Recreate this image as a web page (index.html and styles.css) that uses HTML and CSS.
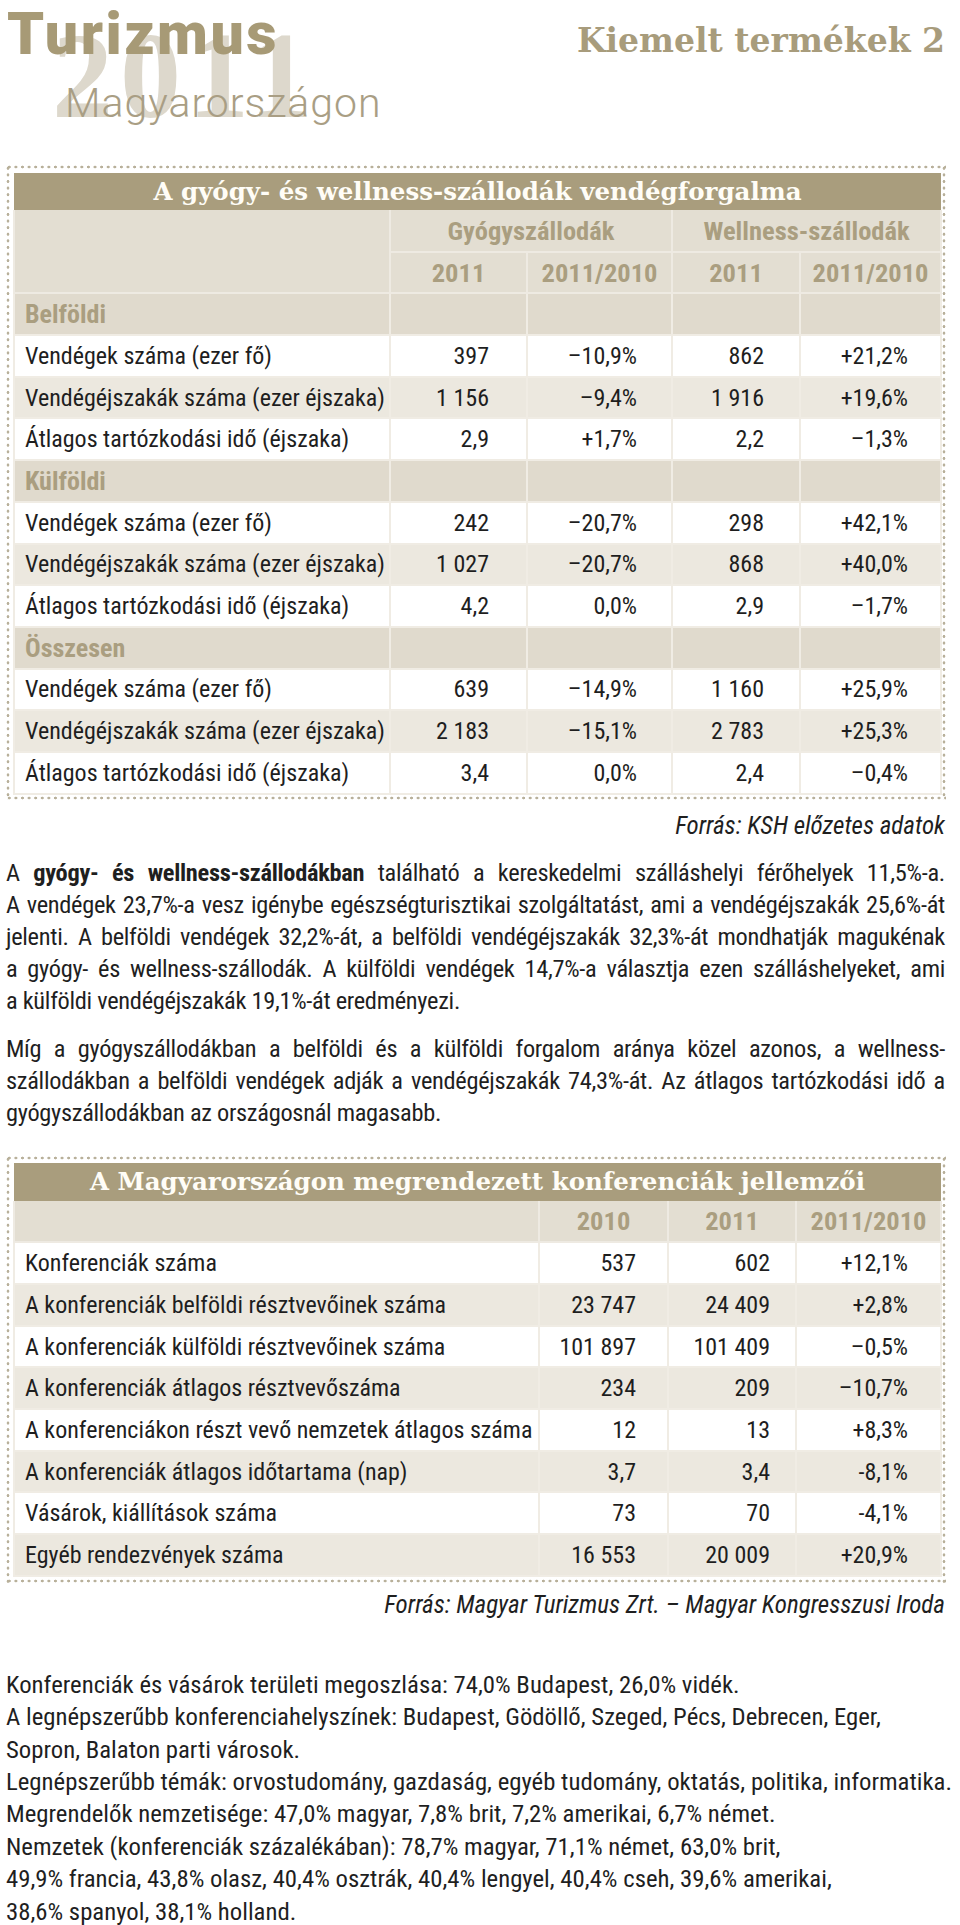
FILE: index.html
```html
<!DOCTYPE html>
<html lang="hu">
<head>
<meta charset="utf-8">
<title>Turizmus 2011 Magyarországon – Kiemelt termékek 2</title>
<link rel="stylesheet" href="styles.css">
</head>
<body>
<div class="page">
  <header class="masthead">
    <div class="brand">
      <span class="brand-year">2011</span>
      <h1 class="brand-name">Turizmus</h1>
      <p class="brand-sub">Magyarországon</p>
    </div>
    <p class="section">Kiemelt termékek 2</p>
  </header>

  <div class="frame">
    <table class="data t1">
      <colgroup>
        <col class="c-label"><col class="c-a"><col class="c-b"><col class="c-c"><col class="c-d">
      </colgroup>
      <thead>
        <tr class="title"><th colspan="5">A gyógy- és wellness-szállodák vendégforgalma</th></tr>
        <tr class="head"><th rowspan="2"></th><th colspan="2">Gyógyszállodák</th><th colspan="2">Wellness-szállodák</th></tr>
        <tr class="head"><th>2011</th><th>2011/2010</th><th>2011</th><th>2011/2010</th></tr>
      </thead>
      <tbody>
        <tr class="group"><th>Belföldi</th><td></td><td></td><td></td><td></td></tr>
        <tr><th>Vendégek száma (ezer fő)</th><td>397</td><td>–10,9%</td><td>862</td><td>+21,2%</td></tr>
        <tr class="alt"><th>Vendégéjszakák száma (ezer éjszaka)</th><td>1 156</td><td>–9,4%</td><td>1 916</td><td>+19,6%</td></tr>
        <tr><th>Átlagos tartózkodási idő (éjszaka)</th><td>2,9</td><td>+1,7%</td><td>2,2</td><td>–1,3%</td></tr>
        <tr class="group"><th>Külföldi</th><td></td><td></td><td></td><td></td></tr>
        <tr><th>Vendégek száma (ezer fő)</th><td>242</td><td>–20,7%</td><td>298</td><td>+42,1%</td></tr>
        <tr class="alt"><th>Vendégéjszakák száma (ezer éjszaka)</th><td>1 027</td><td>–20,7%</td><td>868</td><td>+40,0%</td></tr>
        <tr><th>Átlagos tartózkodási idő (éjszaka)</th><td>4,2</td><td>0,0%</td><td>2,9</td><td>–1,7%</td></tr>
        <tr class="group"><th>Összesen</th><td></td><td></td><td></td><td></td></tr>
        <tr><th>Vendégek száma (ezer fő)</th><td>639</td><td>–14,9%</td><td>1 160</td><td>+25,9%</td></tr>
        <tr class="alt"><th>Vendégéjszakák száma (ezer éjszaka)</th><td>2 183</td><td>–15,1%</td><td>2 783</td><td>+25,3%</td></tr>
        <tr><th>Átlagos tartózkodási idő (éjszaka)</th><td>3,4</td><td>0,0%</td><td>2,4</td><td>–0,4%</td></tr>
      </tbody>
    </table>
  </div>
  <p class="source">Forrás: KSH előzetes adatok</p>

  <p class="text">
    <span class="ln">A <b>gyógy- és wellness-szállodákban</b> található a kereskedelmi szálláshelyi férőhelyek 11,5%-a.</span>
    <span class="ln">A vendégek 23,7%-a vesz igénybe egészségturisztikai szolgáltatást, ami a vendégéjszakák 25,6%-át</span>
    <span class="ln">jelenti. A belföldi vendégek 32,2%-át, a belföldi vendégéjszakák 32,3%-át mondhatják magukénak</span>
    <span class="ln">a gyógy- és wellness-szállodák. A külföldi vendégek 14,7%-a választja ezen szálláshelyeket, ami</span>
    <span class="ln end">a külföldi vendégéjszakák 19,1%-át eredményezi.</span>
  </p>
  <p class="text">
    <span class="ln">Míg a gyógyszállodákban a belföldi és a külföldi forgalom aránya közel azonos, a wellness-</span>
    <span class="ln">szállodákban a belföldi vendégek adják a vendégéjszakák 74,3%-át. Az átlagos tartózkodási idő a</span>
    <span class="ln end">gyógyszállodákban az országosnál magasabb.</span>
  </p>

  <div class="frame frame2">
    <table class="data t2">
      <colgroup>
        <col class="k-label"><col class="k-a"><col class="k-b"><col class="k-c">
      </colgroup>
      <thead>
        <tr class="title"><th colspan="4">A Magyarországon megrendezett konferenciák jellemzői</th></tr>
        <tr class="head"><th></th><th>2010</th><th>2011</th><th>2011/2010</th></tr>
      </thead>
      <tbody>
        <tr><th>Konferenciák száma</th><td>537</td><td>602</td><td>+12,1%</td></tr>
        <tr class="alt"><th>A konferenciák belföldi résztvevőinek száma</th><td>23 747</td><td>24 409</td><td>+2,8%</td></tr>
        <tr><th>A konferenciák külföldi résztvevőinek száma</th><td>101 897</td><td>101 409</td><td>–0,5%</td></tr>
        <tr class="alt"><th>A konferenciák átlagos résztvevőszáma</th><td>234</td><td>209</td><td>–10,7%</td></tr>
        <tr><th>A konferenciákon részt vevő nemzetek átlagos száma</th><td>12</td><td>13</td><td>+8,3%</td></tr>
        <tr class="alt"><th>A konferenciák átlagos időtartama (nap)</th><td>3,7</td><td>3,4</td><td>-8,1%</td></tr>
        <tr><th>Vásárok, kiállítások száma</th><td>73</td><td>70</td><td>-4,1%</td></tr>
        <tr class="alt"><th>Egyéb rendezvények száma</th><td>16 553</td><td>20 009</td><td>+20,9%</td></tr>
      </tbody>
    </table>
  </div>
  <p class="source source2">Forrás: Magyar Turizmus Zrt. – Magyar Kongresszusi Iroda</p>

  <p class="facts">Konferenciák és vásárok területi megoszlása: 74,0% Budapest, 26,0% vidék.<br>
A legnépszerűbb konferenciahelyszínek: Budapest, Gödöllő, Szeged, Pécs, Debrecen, Eger,<br>
Sopron, Balaton parti városok.<br>
Legnépszerűbb témák: orvostudomány, gazdaság, egyéb tudomány, oktatás, politika, informatika.<br>
Megrendelők nemzetisége: 47,0% magyar, 7,8% brit, 7,2% amerikai, 6,7% német.<br>
Nemzetek (konferenciák százalékában): 78,7% magyar, 71,1% német, 63,0% brit,<br>
49,9% francia, 43,8% olasz, 40,4% osztrák, 40,4% lengyel, 40,4% cseh, 39,6% amerikai,<br>
38,6% spanyol, 38,1% holland.</p>
</div>
</body>
</html>
```
FILE: styles.css
```css
body {
  margin: 0;
  background: #ffffff;
  font-family: Roboto, "Liberation Sans", sans-serif;
  color: #1f1f1f;
}

.page {
  width: 960px;
}

/* ---------- masthead ---------- */
.masthead {
  display: flex;
  justify-content: space-between;
  align-items: flex-start;
  height: 165px;
  padding: 0 15px 0 7px;
  box-sizing: border-box;
}

.brand {
  position: relative;
  padding-top: 4px;
}

.brand-year {
  position: absolute;
  left: 45px;
  top: 15px;
  font-family: "Liberation Serif", serif;
  font-weight: bold;
  font-size: 122px;
  line-height: 122px;
  letter-spacing: 7px;
  color: #ddd8cc;
}

.brand-name {
  position: relative;
  margin: 0;
  font-family: Roboto, sans-serif;
  font-weight: 900;
  font-size: 59px;
  line-height: 59px;
  letter-spacing: 2.5px;
  color: #a79a76;
}

.brand-sub {
  position: relative;
  margin: 19.5px 0 0 58px;
  font-family: Roboto, sans-serif;
  font-weight: 300;
  font-size: 41px;
  line-height: 41px;
  letter-spacing: 1px;
  color: #a99e84;
}

.section {
  margin: 24px 0 0;
  font-family: "DejaVu Serif", serif;
  font-weight: bold;
  font-size: 33px;
  line-height: 33px;
  color: #a89c7c;
}

/* ---------- dotted frame ---------- */
.frame {
  margin: 0 14px 0 6px;
  padding: 8px 6px 5px 7px;
  background-image:
    radial-gradient(circle at center, #b8b09a 1.1px, transparent 1.7px),
    radial-gradient(circle at center, #b8b09a 1.1px, transparent 1.7px),
    radial-gradient(circle at center, #b8b09a 1.1px, transparent 1.7px),
    radial-gradient(circle at center, #b8b09a 1.1px, transparent 1.7px);
  background-size: 6.6px 4px, 6.6px 4px, 4px 6.6px, 4px 6.6px;
  background-repeat: repeat-x, repeat-x, repeat-y, repeat-y;
  background-position: 0 0, 0 100%, 0 0, 100% 0;
}

.frame2 {
  margin-top: 27px;
  padding: 7px 6px 6px 7px;
}

/* ---------- tables ---------- */
.data {
  width: 100%;
  table-layout: fixed;
  border-collapse: collapse;
  font-stretch: 75%;
  font-size: 24px;
  color: #1e1e1e;
}

.data th,
.data td {
  padding: 0;
  border: 2px solid #f0ece4;
  white-space: nowrap;
}

.data tr {
  height: 41.7px;
}

.data tbody th {
  text-align: left;
  font-weight: normal;
  padding-left: 10px;
}

.data tbody td {
  text-align: right;
}

.data tbody tr { background: #ffffff; }
.data tbody tr.alt { background: #ece8df; }

.data tr.group { background: #e0dacd; }
.data tr.group th {
  font-weight: bold;
  font-size: 26px;
  color: #aa9e80;
}

.data tr.title { height: 37px; }
.data tr.title th {
  border: 0;
  background: #a99d7d;
  color: #fffdf7;
  font-family: "DejaVu Serif", serif;
  font-weight: bold;
  font-size: 24.5px;
  font-stretch: normal;
  text-align: center;
}

.data tr.head th {
  background: #e3ded2;
  border-color: #eeeae2;
  color: #aa9e80;
  font-weight: bold;
  font-size: 26.5px;
  text-align: center;
}
.data thead tr.title + tr.head th { border-top: 0; }

.t1 .c-label { width: 376px; }
.t1 .c-a { width: 137px; }
.t1 .c-b { width: 145px; }
.t1 .c-c { width: 128px; }
.t1 .c-d { width: 141px; }

.t1 tbody td:nth-child(2) { padding-right: 37px; }
.t1 tbody td:nth-child(3) { padding-right: 34px; }
.t1 tbody td:nth-child(4) { padding-right: 35px; }
.t1 tbody td:nth-child(5) { padding-right: 32px; }

.t2 .k-label { width: 525px; }
.t2 .k-a { width: 129px; }
.t2 .k-b { width: 128px; }
.t2 .k-c { width: 145px; }

.t2 tr.title { height: 38px; }
.t2 tr.title th { font-size: 24.5px; }

.t2 tbody td:nth-child(2) { padding-right: 31px; }
.t2 tbody td:nth-child(3) { padding-right: 25px; }
.t2 tbody td:nth-child(4) { padding-right: 32px; }

/* ---------- text ---------- */
.source {
  margin: 11px 15px 0 0;
  text-align: right;
  font-style: italic;
  font-stretch: 75%;
  font-size: 25px;
  line-height: 30px;
}

.source2 {
  margin-top: 7px;
}

.text {
  margin: 16px 15px 0 6px;
  font-stretch: 75%;
  font-size: 24.4px;
  line-height: 32px;
  letter-spacing: -0.3px;
}

.text .ln {
  display: block;
  white-space: nowrap;
  text-align: justify;
  text-align-last: justify;
}

.text .ln.end {
  text-align-last: left;
}

.facts {
  margin: 49px 15px 0 6px;
  font-stretch: 75%;
  font-size: 24.75px;
  line-height: 32.4px;
  white-space: nowrap;
}
```
